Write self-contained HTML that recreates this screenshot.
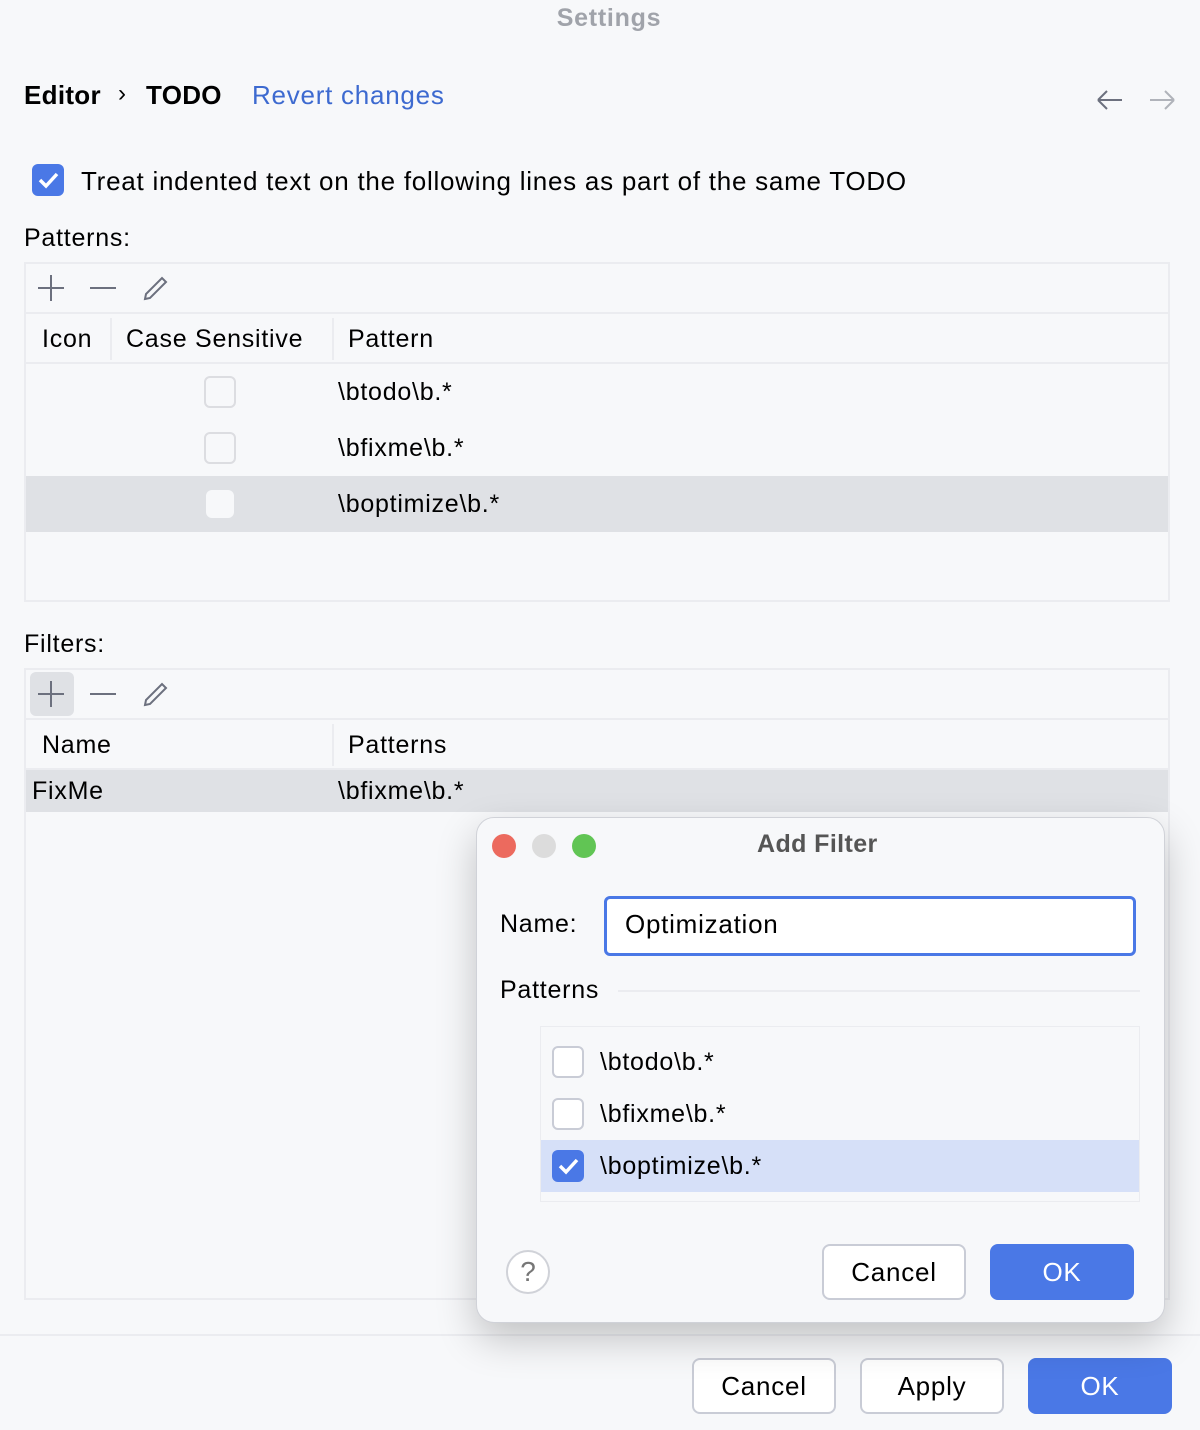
<!DOCTYPE html>
<html><head><style>
*{box-sizing:border-box;margin:0;padding:0}
body{width:1200px;height:1430px;background:#f7f8fa;font-family:"Liberation Sans",sans-serif;color:#000;position:relative;overflow:hidden;font-size:25px;letter-spacing:0.75px}
.a{position:absolute;white-space:nowrap}
.box{position:absolute;border:2px solid #ebecf0}
.hl{position:absolute;background:#ebecf0;height:2px}
.cb{position:absolute;width:32px;height:32px;border:2px solid #dcdde1;border-radius:6px;background:#f7f8fa}
.btn{position:absolute;height:56px;border:2px solid #c9ccd6;border-radius:8px;background:#fff;text-align:center;line-height:52px;font-size:26px}
.ok{background:#4a78e6;border-color:#4a78e6;color:#fff}
</style></head><body>
<div class="a" style="left:0;width:1218px;text-align:center;top:4px;color:#a0a3aa;font-weight:bold;font-size:25px">Settings</div>
<div class="a" style="left:24px;top:80px;font-weight:bold;font-size:26px;letter-spacing:0.3px">Editor</div>
<div class="a" style="left:118px;top:80px;font-size:24px">›</div>
<div class="a" style="left:146px;top:80px;font-weight:bold;font-size:26px;letter-spacing:0.3px">TODO</div>
<div class="a" style="left:252px;top:80px;color:#3d6ad0;font-size:26px">Revert changes</div>
<svg class="a" style="left:1096px;top:88px" width="80" height="24" fill="none" stroke-width="2"><path d="M2 12h24M2 12l9-9M2 12l9 9" stroke="#6c707e"/><path d="M54 12h24M78 12l-9-9M78 12l-9 9" stroke="#b0b3ba"/></svg>
<div class="a" style="left:32px;top:164px;width:32px;height:32px;background:#4a78e6;border-radius:6px"><svg width="32" height="32"><path d="M8 16l6 6 11-12" stroke="#fff" stroke-width="3.5" fill="none"/></svg></div>
<div class="a" style="left:81px;top:166px;font-size:26px">Treat indented text on the following lines as part of the same TODO</div>
<div class="a" style="left:24px;top:224px">Patterns:</div>
<div class="box" style="left:24px;top:262px;width:1146px;height:340px"></div>
<svg class="a" style="left:34px;top:272px" width="150" height="32" fill="none" stroke="#6c707e" stroke-width="2"><path d="M17 3v26M4 16h26M56 16h26M111 27l5-1 16-16-4-4-16 16z"/></svg>
<div class="hl" style="left:26px;top:312px;width:1142px"></div>
<div class="hl" style="left:26px;top:362px;width:1142px"></div>
<div class="a" style="left:110px;top:318px;width:2px;height:42px;background:#ebecf0"></div>
<div class="a" style="left:332px;top:318px;width:2px;height:42px;background:#ebecf0"></div>
<div class="a" style="left:42px;top:325px">Icon</div>
<div class="a" style="left:126px;top:325px">Case Sensitive</div>
<div class="a" style="left:348px;top:325px">Pattern</div>
<div class="a" style="left:26px;top:476px;width:1142px;height:56px;background:#dfe1e5"></div>
<div class="cb" style="left:204px;top:376px"></div>
<div class="cb" style="left:204px;top:432px"></div>
<div class="cb" style="left:206px;top:490px;width:28px;height:28px;border:none;background:#f7f8fa"></div>
<div class="a" style="left:338px;top:378px">\btodo\b.*</div>
<div class="a" style="left:338px;top:434px">\bfixme\b.*</div>
<div class="a" style="left:338px;top:490px">\boptimize\b.*</div>
<div class="a" style="left:24px;top:630px">Filters:</div>
<div class="box" style="left:24px;top:668px;width:1146px;height:632px"></div>
<div class="a" style="left:30px;top:672px;width:44px;height:44px;background:#dfe1e5;border-radius:6px"></div>
<svg class="a" style="left:34px;top:678px" width="150" height="32" fill="none" stroke="#6c707e" stroke-width="2"><path d="M17 3v26M4 16h26M56 16h26M111 27l5-1 16-16-4-4-16 16z"/></svg>
<div class="hl" style="left:26px;top:718px;width:1142px"></div>
<div class="hl" style="left:26px;top:768px;width:1142px"></div>
<div class="a" style="left:332px;top:724px;width:2px;height:42px;background:#ebecf0"></div>
<div class="a" style="left:42px;top:731px">Name</div>
<div class="a" style="left:348px;top:731px">Patterns</div>
<div class="a" style="left:26px;top:770px;width:1142px;height:42px;background:#dfe1e5"></div>
<div class="a" style="left:32px;top:777px">FixMe</div>
<div class="a" style="left:338px;top:777px">\bfixme\b.*</div>
<div class="hl" style="left:0;top:1334px;width:1200px"></div>
<div class="btn" style="left:692px;top:1358px;width:144px">Cancel</div>
<div class="btn" style="left:860px;top:1358px;width:144px">Apply</div>
<div class="btn ok" style="left:1028px;top:1358px;width:144px">OK</div>
<div class="a" style="left:476px;top:817px;width:689px;height:506px;background:#f7f8fa;border:1px solid #d0d2d8;border-radius:18px;box-shadow:0 16px 40px rgba(0,0,0,.22)"></div>
<div class="a" style="left:492px;top:834px;width:24px;height:24px;border-radius:50%;background:#ec6a5e"></div>
<div class="a" style="left:532px;top:834px;width:24px;height:24px;border-radius:50%;background:#dcdcdc"></div>
<div class="a" style="left:572px;top:834px;width:24px;height:24px;border-radius:50%;background:#61c554"></div>
<div class="a" style="left:757px;top:830px;font-weight:bold;color:#555;font-size:25px;letter-spacing:0.4px">Add Filter</div>
<div class="a" style="left:500px;top:910px">Name:</div>
<div class="a" style="left:604px;top:896px;width:532px;height:60px;border:3px solid #4a78e6;border-radius:6px;background:#fff;padding:10px 0 0 18px;font-size:26px">Optimization</div>
<div class="a" style="left:500px;top:976px">Patterns</div>
<div class="hl" style="left:618px;top:990px;width:522px"></div>
<div class="a" style="left:540px;top:1026px;width:600px;height:176px;border:1px solid #ebecf0"></div>
<div class="a" style="left:541px;top:1140px;width:598px;height:52px;background:#d6e0f8"></div>
<div class="cb" style="left:552px;top:1046px;border-color:#c9ccd6;background:#fff"></div>
<div class="cb" style="left:552px;top:1098px;border-color:#c9ccd6;background:#fff"></div>
<div class="a" style="left:552px;top:1150px;width:32px;height:32px;background:#4a78e6;border-radius:6px"><svg width="32" height="32"><path d="M8 16l6 6 11-12" stroke="#fff" stroke-width="3.5" fill="none"/></svg></div>
<div class="a" style="left:600px;top:1048px">\btodo\b.*</div>
<div class="a" style="left:600px;top:1100px">\bfixme\b.*</div>
<div class="a" style="left:600px;top:1152px">\boptimize\b.*</div>
<div class="a" style="left:506px;top:1250px;width:44px;height:44px;border:2px solid #d0d2d8;border-radius:50%;background:#fff;text-align:center;line-height:40px;color:#777;font-size:28px;letter-spacing:0">?</div>
<div class="btn" style="left:822px;top:1244px;width:144px">Cancel</div>
<div class="btn ok" style="left:990px;top:1244px;width:144px">OK</div>
</body></html>
